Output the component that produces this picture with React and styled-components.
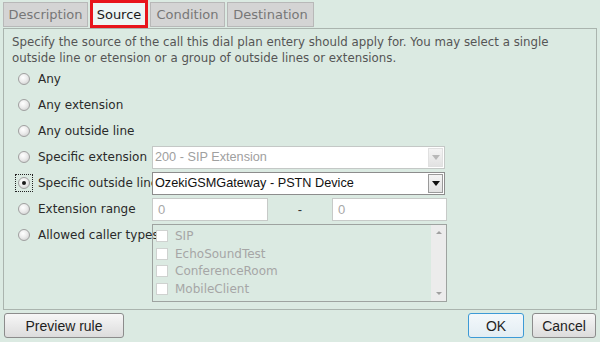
import React from 'react'
import styled, { createGlobalStyle } from 'styled-components'

const Global = createGlobalStyle`
  body {
    margin: 0;
    background: #dbeae2;
    font-family: "DejaVu Sans", Verdana, sans-serif;
  }
`

const Page = styled.div`
  width: 600px;
  height: 342px;
  overflow: hidden;
`

const TabBar = styled.div`
  display: flex;
  align-items: flex-end;
  gap: 2px;
  height: 28px;
  padding-left: 3px;
`

const Tab = styled.div`
  box-sizing: border-box;
  width: ${p => p.$w}px;
  height: ${p => (p.$active ? '28px' : '25px')};
  margin-bottom: ${p => (p.$active ? '0' : '1px')};
  display: flex;
  align-items: center;
  justify-content: center;
  white-space: nowrap;
  font-size: 13px;
  color: ${p => (p.$active ? '#1a1a1a' : '#777')};
  background: ${p => (p.$active ? '#eef5f4' : '#d4d4d4')};
  border: ${p => (p.$active ? '3px solid #e8141c' : '1px solid #b8b8b8')};
`

const Panel = styled.div`
  box-sizing: border-box;
  margin: 0 3px;
  height: 282px;
  border: 1px solid #aab4ae;
  padding: 5px 8px 0;
`

const Intro = styled.p`
  margin: 0;
  font-size: 11.8px;
  line-height: 16px;
  color: #555;
`

const Row = styled.div`
  display: flex;
  align-items: ${p => (p.$top ? 'flex-start' : 'center')};
  height: ${p => (p.$top ? 'auto' : '26px')};
`

const RadioCell = styled.div`
  box-sizing: border-box;
  width: 18px;
  height: 18px;
  margin-left: 3px;
  margin-right: 5px;
  margin-top: ${p => (p.$top ? '4px' : '0')};
  display: flex;
  align-items: center;
  justify-content: center;
  border: 1px dotted ${p => (p.$focus ? '#222' : 'transparent')};
  flex: none;
`

const Radio = styled.span`
  box-sizing: border-box;
  width: 12px;
  height: 12px;
  border-radius: 50%;
  border: 1px solid #a0a0a0;
  background: radial-gradient(circle at 40% 35%, #ffffff 0%, #ececec 45%, #c8c8c8 100%);
  display: flex;
  align-items: center;
  justify-content: center;
  &::after {
    content: '';
    width: 4px;
    height: 4px;
    border-radius: 50%;
    background: ${p => (p.$checked ? '#1a1a1a' : 'transparent')};
  }
`

const Label = styled.div`
  width: 114px;
  flex: none;
  white-space: nowrap;
  font-size: 12px;
  line-height: 26px;
  color: #2a2a2a;
`

const Select = styled.div`
  box-sizing: border-box;
  width: 293px;
  height: 23px;
  flex: none;
  display: flex;
  align-items: center;
  background: #fff;
  border: 1px solid ${p => (p.$disabled ? '#c4c8c6' : '#8d8d8d')};
  font-family: "Liberation Sans", Arial, sans-serif;
  font-size: 12.7px;
  color: ${p => (p.$disabled ? '#a0a0a0' : '#111')};
  padding-left: 2px;
`

const SelectText = styled.span`
  flex: 1;
  white-space: nowrap;
  overflow: hidden;
`

const Arrow = styled.span`
  box-sizing: border-box;
  width: 15px;
  height: 19px;
  margin-right: 1px;
  display: flex;
  align-items: center;
  justify-content: center;
  background: linear-gradient(#f4f4f4, #e2e2e2);
  border: 1px solid ${p => (p.$disabled ? '#e0e0e0' : '#9a9a9a')};
  &::after {
    content: '';
    border-left: 4px solid transparent;
    border-right: 4px solid transparent;
    border-top: 5px solid ${p => (p.$disabled ? '#b8b8b8' : '#111')};
  }
`

const Range = styled.div`
  display: flex;
  align-items: center;
`

const Input = styled.div`
  box-sizing: border-box;
  width: ${p => p.$w}px;
  height: 23px;
  background: #fff;
  border: 1px solid #c7cac8;
  padding-left: 5px;
  display: flex;
  align-items: center;
  font-family: "Liberation Sans", Arial, sans-serif;
  font-size: 13px;
  color: #a8a8a8;
`

const Dash = styled.span`
  width: 64px;
  text-align: center;
  font-family: "Liberation Sans", Arial, sans-serif;
  font-size: 13px;
  color: #333;
`

const ListBox = styled.div`
  box-sizing: border-box;
  width: 295px;
  height: 78px;
  margin-top: 2px;
  flex: none;
  border: 1px solid #9ea3a0;
  display: flex;
  overflow: hidden;
`

const Items = styled.div`
  flex: 1;
  padding: 2px 0 0 3px;
`

const Item = styled.div`
  display: flex;
  align-items: center;
  height: 17.7px;
  font-size: 12px;
  color: #a6a6a6;
  white-space: nowrap;
`

const Check = styled.span`
  box-sizing: border-box;
  width: 12px;
  height: 12px;
  margin-right: 7px;
  background: #fff;
  border: 1px solid #cfd2d0;
  flex: none;
`

const Scroll = styled.div`
  width: 15px;
  background: #ececec;
  display: flex;
  flex-direction: column;
  justify-content: space-between;
  align-items: center;
  padding: 6px 0;
`

const ScrollArrow = styled.span`
  border-left: 3px solid transparent;
  border-right: 3px solid transparent;
  ${p => (p.$up ? 'border-bottom' : 'border-top')}: 3px solid #a0a0a0;
`

const Footer = styled.div`
  display: flex;
  align-items: center;
  padding: 3px 4px 0;
  gap: 8px;
`

const Button = styled.button`
  box-sizing: border-box;
  height: 25px;
  width: ${p => p.$w}px;
  margin-right: ${p => (p.$push ? 'auto' : '0')};
  border-radius: 3px;
  border: 1px solid ${p => (p.$primary ? '#3d9ad6' : '#8c8c8c')};
  background: ${p => (p.$primary
    ? 'linear-gradient(#f3f8fb, #e3edf3)'
    : 'linear-gradient(#f7f7f7, #dcdcdc)')};
  font-family: "Liberation Sans", Arial, sans-serif;
  font-size: 14px;
  color: #1e1e1e;
  padding: 0;
`

const options = [
  'Any',
  'Any extension',
  'Any outside line',
]

const types = ['SIP', 'EchoSoundTest', 'ConferenceRoom', 'MobileClient', 'ClientConsole']

export default function App() {
  return (
    <Page>
      <Global />
      <TabBar>
        <Tab $w={85}>Description</Tab>
        <Tab $w={58} $active>Source</Tab>
        <Tab $w={75}>Condition</Tab>
        <Tab $w={87}>Destination</Tab>
      </TabBar>
      <Panel>
        <Intro>
          Specify the source of the call this dial plan entery should apply for. You may select a single
          outside line or etension or a group of outside lines or extensions.
        </Intro>
        {options.map(o => (
          <Row key={o}>
            <RadioCell><Radio /></RadioCell>
            <Label>{o}</Label>
          </Row>
        ))}
        <Row>
          <RadioCell><Radio /></RadioCell>
          <Label>Specific extension</Label>
          <Select $disabled>
            <SelectText>200 - SIP Extension</SelectText>
            <Arrow $disabled />
          </Select>
        </Row>
        <Row>
          <RadioCell $focus><Radio $checked /></RadioCell>
          <Label>Specific outside line</Label>
          <Select>
            <SelectText>OzekiGSMGateway - PSTN Device</SelectText>
            <Arrow />
          </Select>
        </Row>
        <Row>
          <RadioCell><Radio /></RadioCell>
          <Label>Extension range</Label>
          <Range>
            <Input $w={116}>0</Input>
            <Dash>-</Dash>
            <Input $w={115}>0</Input>
          </Range>
        </Row>
        <Row $top>
          <RadioCell $top><Radio /></RadioCell>
          <Label>Allowed caller types</Label>
          <ListBox>
            <Items>
              {types.map(t => (
                <Item key={t}><Check />{t}</Item>
              ))}
            </Items>
            <Scroll>
              <ScrollArrow $up />
              <ScrollArrow />
            </Scroll>
          </ListBox>
        </Row>
      </Panel>
      <Footer>
        <Button $w={120} $push>Preview rule</Button>
        <Button $w={56} $primary>OK</Button>
        <Button $w={64}>Cancel</Button>
      </Footer>
    </Page>
  )
}
